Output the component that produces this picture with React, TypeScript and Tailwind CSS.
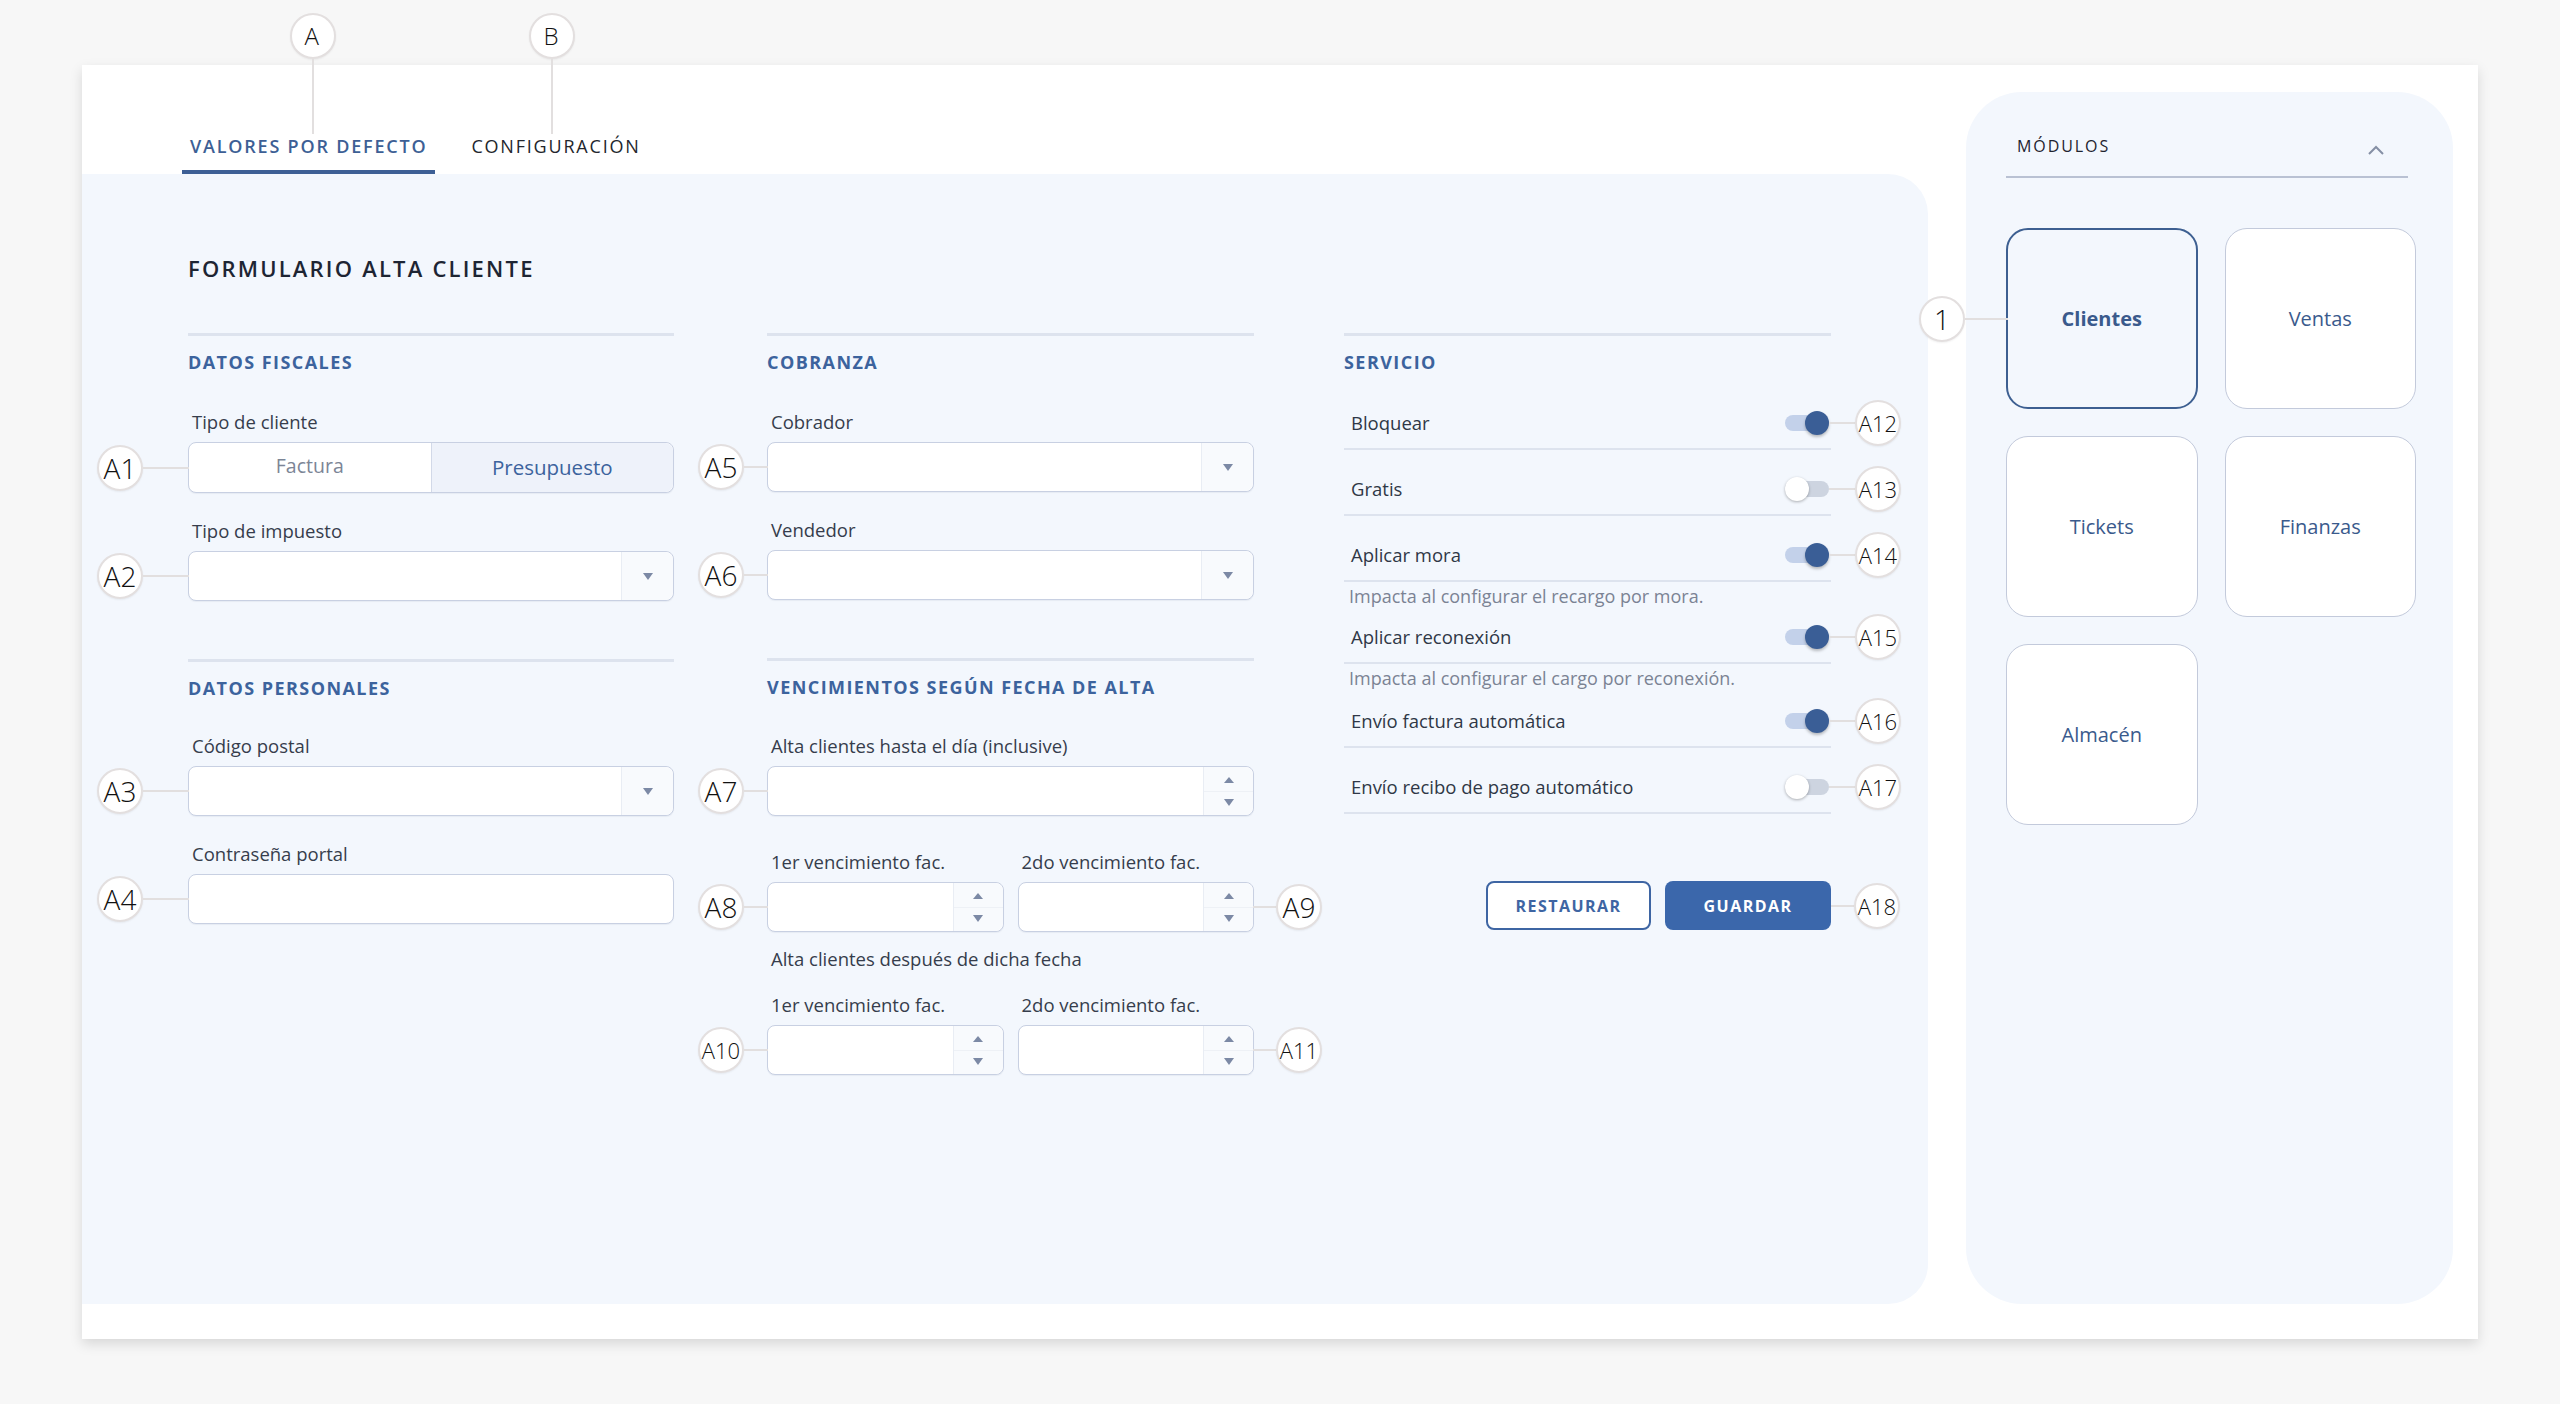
import React from "react"

// --- annotation bubbles (design callouts drawn over the UI) ---
function Bubble({ label, size = "text-[28px]" }: { label: string; size?: string }) {
  return (
    <div
      className={`flex h-[46px] w-[46px] shrink-0 items-center justify-center rounded-full border-2 border-[#e3dfdf] bg-white font-light leading-none text-[#111] shadow-[0_1px_2px_rgba(0,0,0,0.06)] ${size}`}
    >
      {label}
    </div>
  )
}

function Tag({
  label,
  side = "left",
  line,
  size,
}: {
  label: string
  side?: "left" | "right"
  line: string
  size?: string
}) {
  if (side === "right") {
    return (
      <div className="absolute left-full top-1/2 flex -translate-y-1/2 items-center">
        <div className={`h-[2px] bg-[#e2dfdf] ${line}`} />
        <Bubble label={label} size={size} />
      </div>
    )
  }
  return (
    <div className="absolute right-full top-1/2 flex -translate-y-1/2 items-center">
      <Bubble label={label} size={size} />
      <div className={`h-[2px] bg-[#e2dfdf] ${line}`} />
    </div>
  )
}

// --- form bits ---
function Caret() {
  return (
    <svg width="10" height="7" viewBox="0 0 10 7">
      <path d="M0 0 L10 0 L5 7 Z" fill="#7c89a5" />
    </svg>
  )
}

function Label({ children, className = "" }: { children: React.ReactNode; className?: string }) {
  return <div className={`pl-[4px] text-[18.5px] leading-[24px] text-[#363d4c] ${className}`}>{children}</div>
}

function SectionTitle({ children }: { children: React.ReactNode }) {
  return (
    <div className="mt-[14px] text-[18px] font-bold leading-[24px] tracking-[0.08em] text-[#3c639d]">{children}</div>
  )
}

const fieldBox =
  "relative mt-[8px] flex h-[50px] rounded-[8px] border border-[#c8d0e2] bg-white shadow-[0_1px_1px_rgba(30,50,90,0.06)]"

function Select({ tag }: { tag?: React.ReactNode }) {
  return (
    <div className={fieldBox}>
      <div className="flex-1" />
      <div className="flex w-[52px] items-center justify-center rounded-r-[8px] border-l border-[#e9edf4] bg-[#f8fafd]">
        <Caret />
      </div>
      {tag}
    </div>
  )
}

function Spinner({ tag }: { tag?: React.ReactNode }) {
  return (
    <div className={fieldBox}>
      <div className="flex-1" />
      <div className="flex w-[50px] flex-col rounded-r-[8px] border-l border-[#e9edf4] bg-[#f8fafd]">
        <div className="flex flex-1 items-center justify-center border-b border-[#eef1f6] pt-[2px]">
          <svg width="10" height="6" viewBox="0 0 10 6">
            <path d="M0 6 L5 0 L10 6 Z" fill="#7c89a5" />
          </svg>
        </div>
        <div className="flex flex-1 items-center justify-center pb-[2px]">
          <Caret />
        </div>
      </div>
      {tag}
    </div>
  )
}

function Toggle({ on }: { on: boolean }) {
  return (
    <div className="relative h-[24px] w-[44px]">
      <div
        className={
          on
            ? "absolute left-0 right-0 top-[4px] h-[16px] rounded-full bg-[#c3d1ea]"
            : "absolute left-0 right-0 top-[4px] h-[16px] rounded-full bg-[#cdd4e0]"
        }
      />
      <div
        className={
          on
            ? "absolute right-0 top-0 h-[24px] w-[24px] rounded-full bg-[#3a5e96] shadow-[0_2px_3px_rgba(0,0,0,0.25)]"
            : "absolute left-0 top-0 h-[24px] w-[24px] rounded-full bg-white shadow-[0_1px_3px_rgba(0,0,0,0.3)]"
        }
      />
    </div>
  )
}

function ToggleRow({ text, on, tag, mt }: { text: string; on: boolean; tag: string; mt: string }) {
  return (
    <div className={`flex h-[52px] items-center justify-between border-b-2 border-[#dde3ee] pl-[7px] pr-[2px] ${mt}`}>
      <span className="text-[18.5px] leading-[24px] text-[#2f3746]">{text}</span>
      <div className="relative">
        <Toggle on={on} />
        <Tag label={tag} side="right" line="w-[26px]" size="text-[22px]" />
      </div>
    </div>
  )
}

function Helper({ children }: { children: React.ReactNode }) {
  return <div className="mt-[2px] pl-[5px] text-[18px] leading-[24px] text-[#7b8394]">{children}</div>
}

const modules = ["Clientes", "Ventas", "Tickets", "Finanzas", "Almacén"]

export default function App() {
  return (
    <div className="min-h-screen bg-[#f7f7f7] px-[82px] pt-[65px] font-['Open_Sans','Noto_Sans',sans-serif]">
      <div className="flex h-[1274px] w-[2396px] items-start bg-white shadow-[0_5px_12px_rgba(0,0,0,0.13)]">
        {/* left: tabs + form */}
        <div className="flex w-[1846px] flex-col">
          <div className="flex h-[109px] items-end pl-[100px]">
            <div className="relative border-b-4 border-[#3d5f95] px-[8px] pb-[12px] text-[18px] font-semibold leading-[24px] tracking-[0.1em] text-[#3d5f95]">
              VALORES POR DEFECTO
              <div className="absolute bottom-full left-[calc(50%+4px)] flex -translate-x-1/2 flex-col items-center">
                <Bubble label="A" size="text-[24px]" />
                <div className="h-[75px] w-[2px] bg-[#e2dfdf]" />
              </div>
            </div>
            <div className="relative ml-[28px] border-b-4 border-transparent px-[8px] pb-[12px] text-[18px] leading-[24px] tracking-[0.1em] text-[#23262d]">
              CONFIGURACIÓN
              <div className="absolute bottom-full left-[calc(50%-4px)] flex -translate-x-1/2 flex-col items-center">
                <Bubble label="B" size="text-[24px]" />
                <div className="h-[75px] w-[2px] bg-[#e2dfdf]" />
              </div>
            </div>
          </div>

          <div className="h-[1130px] rounded-r-[40px] bg-[#f3f7fd] pl-[106px] pt-[79px]">
            <h1 className="text-[22px] font-semibold leading-[30px] tracking-[0.1em] text-[#1d2533]">
              FORMULARIO ALTA CLIENTE
            </h1>

            <div className="mt-[50px] flex items-start">
              {/* column 1 */}
              <div className="w-[486px]">
                <div className="border-t-[3px] border-[#dde3ee]">
                  <SectionTitle>DATOS FISCALES</SectionTitle>
                  <Label className="mt-[36px]">Tipo de cliente</Label>
                  <div className="relative mt-[8px] flex h-[51px] rounded-[8px] border border-[#c8d0e2] bg-white leading-none shadow-[0_1px_1px_rgba(30,50,90,0.06)]">
                    <div className="flex flex-1 items-center justify-center pb-[3px] text-[19.5px] text-[#7c8596]">Factura</div>
                    <div className="flex flex-1 items-center justify-center rounded-r-[8px] border-l border-[#d2d9e8] bg-[#eef2fa] text-[20.5px] font-medium text-[#3c639d]">
                      Presupuesto
                    </div>
                    <Tag label="A1" line="w-[46px]" />
                  </div>
                  <Label className="mt-[26px]">Tipo de impuesto</Label>
                  <Select tag={<Tag label="A2" line="w-[46px]" />} />
                </div>

                <div className="mt-[58px] border-t-[3px] border-[#dde3ee]">
                  <SectionTitle>DATOS PERSONALES</SectionTitle>
                  <Label className="mt-[34px]">Código postal</Label>
                  <Select tag={<Tag label="A3" line="w-[46px]" />} />
                  <Label className="mt-[26px]">Contraseña portal</Label>
                  <div className={fieldBox}>
                    <Tag label="A4" line="w-[46px]" />
                  </div>
                </div>
              </div>

              {/* column 2 */}
              <div className="ml-[93px] w-[487px]">
                <div className="border-t-[3px] border-[#dde3ee]">
                  <SectionTitle>COBRANZA</SectionTitle>
                  <Label className="mt-[36px]">Cobrador</Label>
                  <Select tag={<Tag label="A5" line="w-[24px]" />} />
                  <Label className="mt-[26px]">Vendedor</Label>
                  <Select tag={<Tag label="A6" line="w-[24px]" />} />
                </div>

                <div className="mt-[58px] border-t-[3px] border-[#dde3ee]">
                  <SectionTitle>VENCIMIENTOS SEGÚN FECHA DE ALTA</SectionTitle>
                  <Label className="mt-[35px]">Alta clientes hasta el día (inclusive)</Label>
                  <Spinner tag={<Tag label="A7" line="w-[24px]" />} />

                  <div className="mt-[34px] grid grid-cols-2 gap-x-[14px]">
                    <div>
                      <Label>1er vencimiento fac.</Label>
                      <Spinner tag={<Tag label="A8" line="w-[24px]" />} />
                    </div>
                    <div>
                      <Label>2do vencimiento fac.</Label>
                      <Spinner tag={<Tag label="A9" side="right" line="w-[23px]" />} />
                    </div>
                  </div>

                  <Label className="mt-[15px]">Alta clientes después de dicha fecha</Label>

                  <div className="mt-[22px] grid grid-cols-2 gap-x-[14px]">
                    <div>
                      <Label>1er vencimiento fac.</Label>
                      <Spinner tag={<Tag label="A10" line="w-[24px]" size="text-[22px]" />} />
                    </div>
                    <div>
                      <Label>2do vencimiento fac.</Label>
                      <Spinner tag={<Tag label="A11" side="right" line="w-[23px]" size="text-[22px]" />} />
                    </div>
                  </div>
                </div>
              </div>

              {/* column 3 */}
              <div className="ml-[90px] w-[487px]">
                <div className="border-t-[3px] border-[#dde3ee]">
                  <SectionTitle>SERVICIO</SectionTitle>
                  <ToggleRow text="Bloquear" on tag="A12" mt="mt-[24px]" />
                  <ToggleRow text="Gratis" on={false} tag="A13" mt="mt-[14px]" />
                  <ToggleRow text="Aplicar mora" on tag="A14" mt="mt-[14px]" />
                  <Helper>Impacta al configurar el recargo por mora.</Helper>
                  <ToggleRow text="Aplicar reconexión" on tag="A15" mt="mt-[4px]" />
                  <Helper>Impacta al configurar el cargo por reconexión.</Helper>
                  <ToggleRow text="Envío factura automática" on tag="A16" mt="mt-[6px]" />
                  <ToggleRow text="Envío recibo de pago automático" on={false} tag="A17" mt="mt-[14px]" />

                  <div className="mt-[67px] flex justify-end gap-[14px]">
                    <button className="h-[49px] w-[165px] rounded-[8px] border-2 border-[#3e65a3] bg-white text-[16px] font-bold tracking-[0.09em] text-[#3e65a3]">
                      RESTAURAR
                    </button>
                    <div className="relative">
                      <button className="h-[49px] w-[166px] rounded-[8px] bg-[#3b67ab] text-[16px] font-bold tracking-[0.09em] text-white">
                        GUARDAR
                      </button>
                      <Tag label="A18" side="right" line="w-[23px]" size="text-[22px]" />
                    </div>
                  </div>
                </div>
              </div>
            </div>
          </div>
        </div>

        {/* right: modules */}
        <div className="ml-[38px] mt-[27px] h-[1212px] w-[487px] rounded-[56px] bg-[#f3f7fd] pl-[40px] pr-[37px] pt-[42px]">
          <div className="mr-[8px] flex items-center justify-between border-b-2 border-[#b9c1d3] pb-[18px] pl-[11px] pr-[24px]">
            <span className="text-[16px] leading-[24px] tracking-[0.12em] text-[#1f2430]">MÓDULOS</span>
            <svg width="16" height="10" viewBox="0 0 16 10" className="mt-[8px]">
              <path d="M1 9 L8 2 L15 9" fill="none" stroke="#8590a5" strokeWidth="2" />
            </svg>
          </div>

          <div className="mt-[50px] grid grid-cols-2 gap-[27px]">
            {modules.map((m, i) =>
              i === 0 ? (
                <div
                  key={m}
                  className="relative flex h-[181px] items-center justify-center rounded-[22px] border-2 border-[#3d5f91] bg-[#f3f7fd] text-[20px] font-bold text-[#3a5a8c]"
                >
                  {m}
                  <Tag label="1" line="w-[43px]" />
                </div>
              ) : (
                <div
                  key={m}
                  className="flex h-[181px] items-center justify-center rounded-[22px] border border-[#c3cadb] bg-white text-[20px] font-medium text-[#3a5a8c]"
                >
                  {m}
                </div>
              )
            )}
          </div>
        </div>
      </div>
    </div>
  )
}
